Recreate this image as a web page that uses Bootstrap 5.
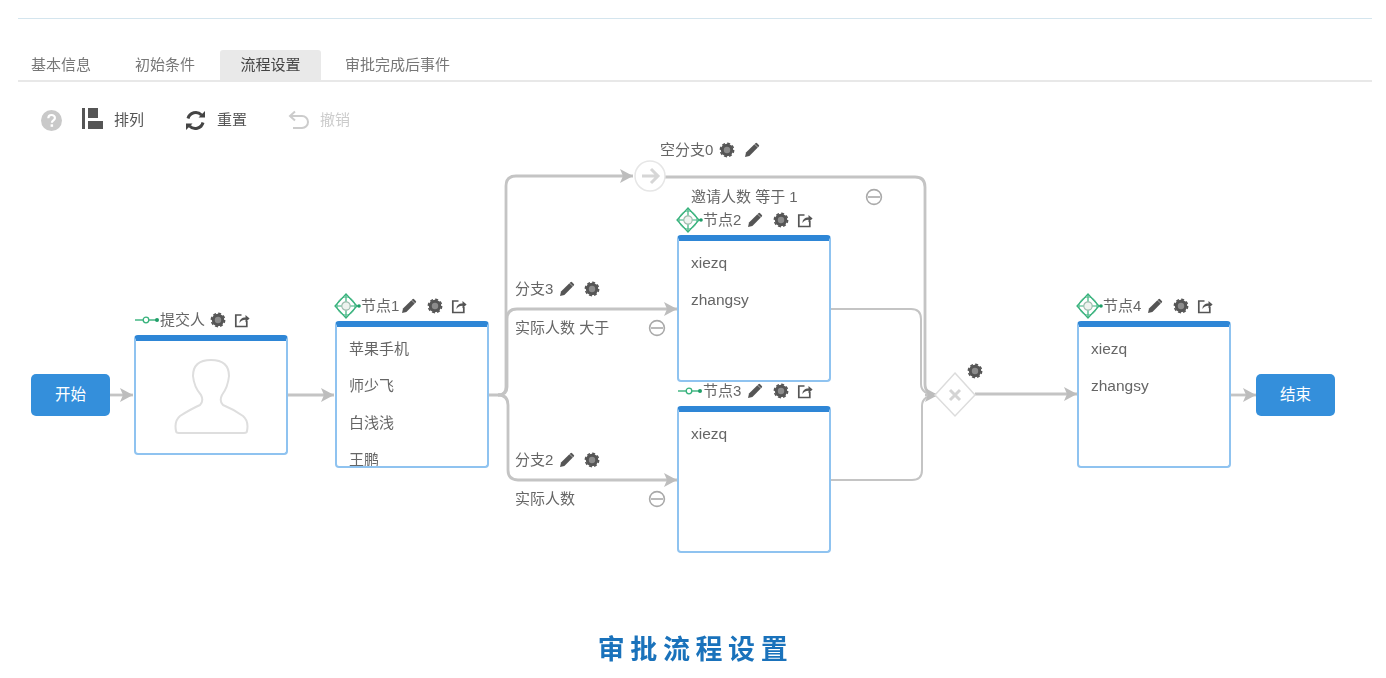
<!DOCTYPE html>
<html lang="zh">
<head>
<meta charset="utf-8">
<title>审批流程设置</title>
<link href="https://cdn.jsdelivr.net/npm/bootstrap@5.3.0/dist/css/bootstrap.min.css" rel="stylesheet">
<style>
body{background:#fff;font-family:"Liberation Sans","Noto Sans CJK SC",sans-serif;font-size:15px;color:#666;overflow:hidden}
.shot{filter:blur(.6px)}
.top-rule{height:1px;margin:18px 14px 0 18px;background:#d4e5ee}
.tab-strip{margin:31px 14px 0 18px;height:32px;border-bottom:2px solid #e8e8e8;gap:5px}
.tab-strip .nav-link{height:30px;line-height:30px;padding:0 20px;color:#777;font-size:15px;border-radius:3px 3px 0 0}
.tab-strip .nav-link.first-tab{padding:0 19px 0 13px}
.tab-strip .nav-link.active{background:#e9e9e9;color:#444;padding:0 20.5px}
.tab-strip .nav-link.last-tab{padding:0 20px 0 19px}
.tools{height:56px;padding:20px 0 0 41px;font-size:15px;color:#555}
.tools .help-ico{margin-right:20px}
.tool-item{margin-right:41px;gap:11px}
.tool-item.off{color:#ccc}
.ico-arrange{margin-bottom:3px}
.stage{height:492px}
.wires{left:0;top:0;width:1386px;height:492px}
.flow-cap{left:31px;top:236px;width:79px;height:42px;padding:0;border:0;border-radius:5px;background:#348fdb;color:#fff;font-size:15.5px}
.flow-cap:hover{background:#348fdb;color:#fff}
.cap-end{left:1256px}
.node-wrap{width:154px}
.nd-submit{left:134px;top:172px}
.nd-1{left:335px;top:158px}
.nd-2{left:677px;top:72px}
.nd-3{left:677px;top:243px}
.nd-4{left:1077px;top:158px}
.node-head{height:20px;line-height:20px;margin-bottom:5px;white-space:nowrap;color:#666}
.node-head svg,.lbl svg{flex:none}
.ico-mv{margin-left:-1px}
.pad-pen{margin-left:6px}
.pad-pen.tight{margin-left:2px}
.pad-gear{margin-left:10px}
.pad-share{margin-left:8px}
.pad-first{margin-left:5px}
.node-box{height:147px;border:2px solid #8fc3f0;border-top:6px solid #2e86d6;border-radius:4px;background:#fff;overflow:hidden;padding:3px 12px 0;color:#666}
.node-box.short-box{height:120px;padding:0}
.node-box p{margin:0;height:37px;line-height:37px;font-size:15px;white-space:nowrap}
.latin{font-size:15.5px!important}
.lbl{height:20px;line-height:20px;white-space:nowrap}
.l-empty{left:660px;top:2px}
.l-empty-cond{left:691px;top:49px;width:192px}
.l-b3{left:515px;top:141px}
.l-b3-cond{left:515px;top:180px;width:151px}
.l-b2{left:515px;top:312px}
.l-b2-cond{left:515px;top:351px;width:151px}
.l-gear{left:967px;top:223px}
.gap-pen{margin-left:6px}
.gap-gear{margin-left:9px}
.page-title{height:40px;line-height:41px;font-size:27px;font-weight:700;letter-spacing:5.6px;color:#1a72bb;padding-left:5px}
</style>
</head>
<body>
<svg width="0" height="0" class="position-absolute">
  <defs>
    <symbol id="gear" viewBox="0 0 16 16">
      <circle cx="8" cy="8" r="6.2" fill="#555"/>
      <circle cx="8" cy="8" r="6.6" fill="none" stroke="#555" stroke-width="1.600" stroke-dasharray="3 2.180"/>
      <circle cx="8" cy="8" r="3.200" fill="#8c8c8c"/>
    </symbol>
    <symbol id="pen" viewBox="0 0 16 16">
      <path d="M1 15l1-4.400L10.400 2.200l3.400 3.400L5.400 14z" fill="#555"/>
      <path d="M11.400 1.200a1.200 1.200 0 0 1 1.700 0l1.700 1.700a1.200 1.200 0 0 1 0 1.700l-.7.7-3.400-3.400z" fill="#555"/>
    </symbol>
    <symbol id="share" viewBox="0 0 16 16">
      <path d="M7.500 3H1.800v11.500h11V9" fill="none" stroke="#555" stroke-width="1.700"/>
      <path d="M5.500 11c0-3.800 2.300-5.600 6-5.600V3L15.600 6.600 11.500 10.200V7.800c-2.600 0-4.600.8-6 3.200z" fill="#555"/>
    </symbol>
    <symbol id="mv" viewBox="0 0 27 26">
      <circle cx="12" cy="13" r="9" fill="none" stroke="#7cc9a6" stroke-width="1"/>
      <path d="M12 1L23 13 12 25 1 13z" fill="none" stroke="#37b27c" stroke-width="1.300"/>
      <path d="M12 1V25M1 13H26" stroke="#37b27c" stroke-width="1.200"/>
      <circle cx="12" cy="13" r="4.200" fill="#eef3ef" stroke="#9fbdae" stroke-width="1.200"/>
      <circle cx="25" cy="13" r="1.800" fill="#1f9e68"/>
    </symbol>
    <symbol id="cn" viewBox="0 0 26 12">
      <path d="M1 6H24" stroke="#37b27c" stroke-width="1.400"/>
      <circle cx="12" cy="6" r="2.800" fill="#fff" stroke="#37b27c" stroke-width="1.300"/>
      <circle cx="23" cy="6" r="2" fill="#1f9e68"/>
    </symbol>
    <symbol id="minus" viewBox="0 0 18 18">
      <circle cx="9" cy="9" r="7.400" fill="none" stroke="#a9a9a9" stroke-width="1.600"/>
      <path d="M3 9H15" stroke="#a9a9a9" stroke-width="1.600"/>
    </symbol>
  </defs>
</svg>

<div class="shot">
  <div class="top-rule"></div>

  <ul class="nav tab-strip">
    <li class="nav-item"><a class="nav-link first-tab" href="#">基本信息</a></li>
    <li class="nav-item"><a class="nav-link" href="#">初始条件</a></li>
    <li class="nav-item"><a class="nav-link active" href="#">流程设置</a></li>
    <li class="nav-item"><a class="nav-link last-tab" href="#">审批完成后事件</a></li>
  </ul>

  <div class="tools d-flex align-items-center">
    <svg class="help-ico" width="21" height="21" viewBox="0 0 21 21"><circle cx="10.500" cy="10.500" r="10.500" fill="#c9c9c9"/><path d="M7.300 8.200c0-4.200 6.600-4.200 6.600-.2 0 2.400-3 2.200-3 4.700" fill="none" stroke="#fff" stroke-width="2.200"/><rect x="9.600" y="14.300" width="2.500" height="2.500" fill="#fff"/></svg>
    <div class="tool-item d-flex align-items-center">
      <svg class="ico-arrange" width="21" height="21" viewBox="0 0 21 21"><rect x="0" y="0" width="3" height="21" fill="#555"/><rect x="6" y="0" width="10" height="10" fill="#555"/><rect x="6" y="13" width="15" height="8" fill="#555"/></svg>
      <span>排列</span>
    </div>
    <div class="tool-item d-flex align-items-center">
      <svg width="21" height="21" viewBox="0 0 21 21"><path d="M3 8.500A8 8 0 0 1 16.500 5M18 12.500A8 8 0 0 1 4.500 16" fill="none" stroke="#444" stroke-width="3"/><path d="M13.500 7.500H20V1zM7.500 13.500H1V20z" fill="#444"/></svg>
      <span>重置</span>
    </div>
    <div class="tool-item off d-flex align-items-center">
      <svg width="21" height="20" viewBox="0 0 21 20"><path d="M3 6H14a5.500 5.500 0 0 1 0 12H5" fill="none" stroke="#ccc" stroke-width="2"/><path d="M7 1.500L2 6l5 4.500" fill="none" stroke="#ccc" stroke-width="2"/></svg>
      <span>撤销</span>
    </div>
  </div>

  <div class="stage position-relative">
    <svg class="wires position-absolute" viewBox="0 138 1386 492">
      <defs>
        <marker id="ah" markerUnits="userSpaceOnUse" markerWidth="13" markerHeight="14" refX="13" refY="7" orient="auto"><path d="M0 0L13 7 0 14 3 7z" fill="#bdbdbd"/></marker>
      </defs>
      <g fill="none" stroke="#c4c4c4" stroke-width="2.800">
        <path d="M110 395H133" marker-end="url(#ah)"/>
        <path d="M287 395H334" marker-end="url(#ah)"/>
        <path d="M488 395H498Q506 395 506 387V186Q506 176 516 176H633" marker-end="url(#ah)"/>
        <path d="M498 395Q507 395 507 387V319Q507 309 517 309H677" marker-end="url(#ah)"/>
        <path d="M498 395Q508 395 508 405V470Q508 480 518 480H677" marker-end="url(#ah)"/>
        <path d="M665 177H915Q925 177 925 187V384Q925 395 938 395"/>
        <path d="M831 309H911Q921 309 921 319V384Q921 395 938 395" stroke-width="2"/>
        <path d="M831 480H912Q922 480 922 470V406Q922 395 938 395" stroke-width="2"/>
        <path d="M925 395H938" marker-end="url(#ah)"/>
        <path d="M975 394H1077" marker-end="url(#ah)"/>
        <path d="M1231 395H1256" marker-end="url(#ah)"/>
      </g>
      <circle cx="650" cy="176" r="15" fill="#fff" stroke="#e6e6e6" stroke-width="1.500"/>
      <path d="M642 176H657M651 169l7 7-7 7" fill="none" stroke="#d6d6d6" stroke-width="3"/>
      <path d="M955 373L975 395 955 416 935 395z" fill="#fff" stroke="#dcdcdc" stroke-width="1.500"/>
      <path d="M950 390L960 400M960 390L950 400" stroke="#d4d4d4" stroke-width="3"/>
    </svg>

    <button type="button" class="btn flow-cap position-absolute">开始</button>
    <button type="button" class="btn flow-cap cap-end position-absolute">结束</button>

    <div class="node-wrap nd-submit position-absolute">
      <div class="node-head d-flex align-items-center">
        <svg width="26" height="12"><use href="#cn"/></svg>
        <span>提交人</span>
        <svg class="pad-first" width="16" height="16"><use href="#gear"/></svg>
        <svg class="pad-share" width="16" height="16"><use href="#share"/></svg>
      </div>
      <div class="node-box short-box d-flex justify-content-center align-items-center">
        <svg width="76" height="76" viewBox="172 359 76 76"><path d="M175 431Q173 421 179 416Q190 409 199 405Q203 401 200 395Q193 387 192 376Q192 360 210 360Q228 360 228 376Q227 387 221 395Q218 401 222 405Q232 409 242 416Q248 421 246 431Q246 433 243 433H178Q175 433 175 431z" fill="none" stroke="#dedede" stroke-width="2"/></svg>
      </div>
    </div>

    <div class="node-wrap nd-1 position-absolute">
      <div class="node-head d-flex align-items-center">
        <svg class="ico-mv" width="27" height="26"><use href="#mv"/></svg>
        <span>节点1</span>
        <svg class="pad-pen tight" width="16" height="16"><use href="#pen"/></svg>
        <svg class="pad-gear" width="16" height="16"><use href="#gear"/></svg>
        <svg class="pad-share" width="16" height="16"><use href="#share"/></svg>
      </div>
      <div class="node-box"><p>苹果手机</p><p>师少飞</p><p>白浅浅</p><p>王鹏</p></div>
    </div>

    <div class="node-wrap nd-2 position-absolute">
      <div class="node-head d-flex align-items-center">
        <svg class="ico-mv" width="27" height="26"><use href="#mv"/></svg>
        <span>节点2</span>
        <svg class="pad-pen" width="16" height="16"><use href="#pen"/></svg>
        <svg class="pad-gear" width="16" height="16"><use href="#gear"/></svg>
        <svg class="pad-share" width="16" height="16"><use href="#share"/></svg>
      </div>
      <div class="node-box"><p class="latin">xiezq</p><p class="latin">zhangsy</p></div>
    </div>

    <div class="node-wrap nd-3 position-absolute">
      <div class="node-head d-flex align-items-center">
        <svg width="26" height="12"><use href="#cn"/></svg>
        <span>节点3</span>
        <svg class="pad-pen" width="16" height="16"><use href="#pen"/></svg>
        <svg class="pad-gear" width="16" height="16"><use href="#gear"/></svg>
        <svg class="pad-share" width="16" height="16"><use href="#share"/></svg>
      </div>
      <div class="node-box"><p class="latin">xiezq</p></div>
    </div>

    <div class="node-wrap nd-4 position-absolute">
      <div class="node-head d-flex align-items-center">
        <svg class="ico-mv" width="27" height="26"><use href="#mv"/></svg>
        <span>节点4</span>
        <svg class="pad-pen" width="16" height="16"><use href="#pen"/></svg>
        <svg class="pad-gear" width="16" height="16"><use href="#gear"/></svg>
        <svg class="pad-share" width="16" height="16"><use href="#share"/></svg>
      </div>
      <div class="node-box"><p class="latin">xiezq</p><p class="latin">zhangsy</p></div>
    </div>

    <div class="lbl l-empty position-absolute d-flex align-items-center">
      <span>空分支0</span>
      <svg class="gap-pen" width="16" height="16"><use href="#gear"/></svg>
      <svg class="gap-gear" width="16" height="16"><use href="#pen"/></svg>
    </div>
    <div class="lbl l-empty-cond position-absolute d-flex align-items-center justify-content-between">
      <span>邀请人数 等于 1</span>
      <svg width="18" height="18"><use href="#minus"/></svg>
    </div>
    <div class="lbl l-b3 position-absolute d-flex align-items-center">
      <span>分支3</span>
      <svg class="gap-pen" width="16" height="16"><use href="#pen"/></svg>
      <svg class="gap-gear" width="16" height="16"><use href="#gear"/></svg>
    </div>
    <div class="lbl l-b3-cond position-absolute d-flex align-items-center justify-content-between">
      <span>实际人数 大于</span>
      <svg width="18" height="18"><use href="#minus"/></svg>
    </div>
    <div class="lbl l-b2 position-absolute d-flex align-items-center">
      <span>分支2</span>
      <svg class="gap-pen" width="16" height="16"><use href="#pen"/></svg>
      <svg class="gap-gear" width="16" height="16"><use href="#gear"/></svg>
    </div>
    <div class="lbl l-b2-cond position-absolute d-flex align-items-center justify-content-between">
      <span>实际人数</span>
      <svg width="18" height="18"><use href="#minus"/></svg>
    </div>
    <div class="lbl l-gear position-absolute d-flex align-items-center">
      <svg width="16" height="16"><use href="#gear"/></svg>
    </div>
  </div>

  <div class="page-title text-center">审批流程设置</div>
</div>
<script src="https://cdn.jsdelivr.net/npm/bootstrap@5.3.0/dist/js/bootstrap.bundle.min.js"></script>
</body>
</html>
